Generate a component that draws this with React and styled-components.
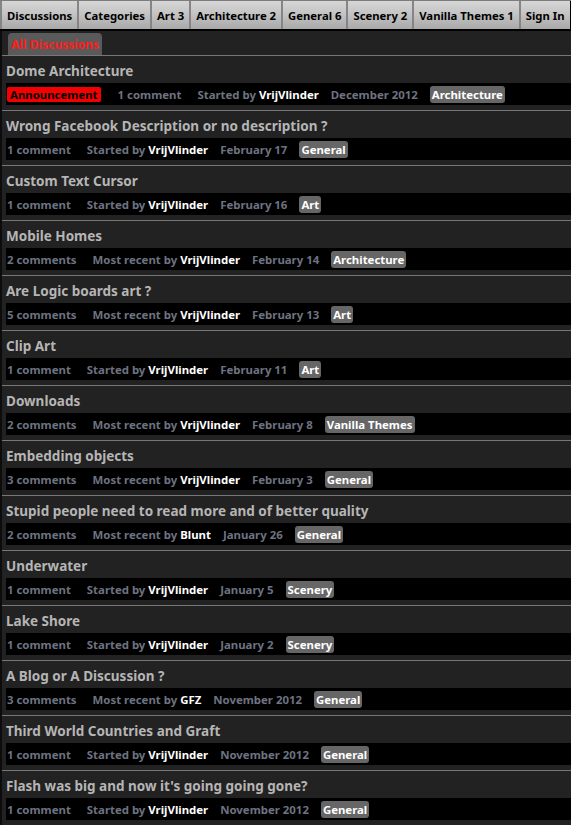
import React from "react";
import styled, { createGlobalStyle } from "styled-components";

const Global = createGlobalStyle`
  html, body { margin: 0; padding: 0; overflow: hidden; background: #222; }
  body { font-family: "Noto Sans", "DejaVu Sans", sans-serif; }
`;

const Page = styled.div`
  width: 571px;
  min-height: 825px;
  background: #222;
`;

const Nav = styled.nav`
  display: flex;
  height: 28px;
  border-top: 1px solid #7c7c7c;
  border-bottom: 2px solid #000;
  background: #000;
`;

const NavTab = styled.a`
  display: flex;
  align-items: center;
  padding: 0 5px;
  border-left: 2px solid #858585;
  background: linear-gradient(#d6d6d6 0%, #c4c4c4 45%, #a9a9a9 100%);
  color: #000;
  font-size: 11.3px;
  font-weight: 700;
  white-space: nowrap;
  text-decoration: none;
`;

const Main = styled.main`
  border-left: 2px solid #0c0c0c;
`;

const SubTabs = styled.div`
  display: flex;
  padding: 2px 0 0 6px;
  border-bottom: 1px solid #777;
`;

const SubTab = styled.span`
  display: flex;
  align-items: center;
  height: 22px;
  padding: 0 3px;
  border-radius: 4px 4px 0 0;
  background: #5a5a5a;
  color: #ff1c1c;
  font-size: 12px;
  font-weight: 700;
`;

const Item = styled.div`
  padding-bottom: 5px;
  border-bottom: 1px solid #777;
`;

const Title = styled.div`
  height: 24px;
  padding: 3px 0 0 4px;
  line-height: 24px;
  color: #b5b5b5;
  font-size: 13.5px;
  font-weight: 700;
  white-space: nowrap;
`;

const Meta = styled.div`
  display: flex;
  align-items: center;
  height: 22px;
  margin-left: 4px;
  padding-left: 1px;
  background: #000;
  font-size: 11.4px;
  font-weight: 700;
  white-space: nowrap;
`;

const Announce = styled.span`
  display: inline-flex;
  align-items: center;
  height: 15px;
  padding: 0 3px;
  margin-right: 17px;
  border-radius: 2px;
  background: #f50000;
  color: #000;
`;

const Gray = styled.span`
  color: #6d7380;
  margin-right: ${(p) => p.$gap}px;
`;

const User = styled.span`
  color: #fff;
`;

const Tag = styled.span`
  display: inline-flex;
  align-items: center;
  height: 17px;
  padding: 0 2px;
  border-radius: 3px;
  background: #666;
  color: #fff;
`;

const tabs = [
  "Discussions",
  "Categories",
  "Art 3",
  "Architecture 2",
  "General 6",
  "Scenery 2",
  "Vanilla Themes 1",
  "Sign In",
];

const items = [
  ["Dome Architecture", 1, "Started by", "VrijVlinder", "December 2012", "Architecture", true],
  ["Wrong Facebook Description or no description ?", 1, "Started by", "VrijVlinder", "February 17", "General"],
  ["Custom Text Cursor", 1, "Started by", "VrijVlinder", "February 16", "Art"],
  ["Mobile Homes", 2, "Most recent by", "VrijVlinder", "February 14", "Architecture"],
  ["Are Logic boards art ?", 5, "Most recent by", "VrijVlinder", "February 13", "Art"],
  ["Clip Art", 1, "Started by", "VrijVlinder", "February 11", "Art"],
  ["Downloads", 2, "Most recent by", "VrijVlinder", "February 8", "Vanilla Themes"],
  ["Embedding objects", 3, "Most recent by", "VrijVlinder", "February 3", "General"],
  ["Stupid people need to read more and of better quality", 2, "Most recent by", "Blunt", "January 26", "General"],
  ["Underwater", 1, "Started by", "VrijVlinder", "January 5", "Scenery"],
  ["Lake Shore", 1, "Started by", "VrijVlinder", "January 2", "Scenery"],
  ["A Blog or A Discussion ?", 3, "Most recent by", "GFZ", "November 2012", "General"],
  ["Third World Countries and Graft", 1, "Started by", "VrijVlinder", "November 2012", "General"],
  ["Flash was big and now it's going going gone?", 1, "Started by", "VrijVlinder", "November 2012", "General"],
];

export default function App() {
  return (
    <Page>
      <Global />
      <Nav>
        {tabs.map((t) => (
          <NavTab key={t}>{t}</NavTab>
        ))}
      </Nav>
      <Main>
        <SubTabs>
          <SubTab>All Discussions</SubTab>
        </SubTabs>
        {items.map(([title, n, verb, user, date, cat, ann]) => (
          <Item key={title}>
            <Title>{title}</Title>
            <Meta>
              {ann && <Announce>Announcement</Announce>}
              <Gray $gap={16}>
                {n} {n === 1 ? "comment" : "comments"}
              </Gray>
              <Gray $gap={12}>
                {verb} <User>{user}</User>
              </Gray>
              <Gray $gap={12}>{date}</Gray>
              <Tag>{cat}</Tag>
            </Meta>
          </Item>
        ))}
      </Main>
    </Page>
  );
}
